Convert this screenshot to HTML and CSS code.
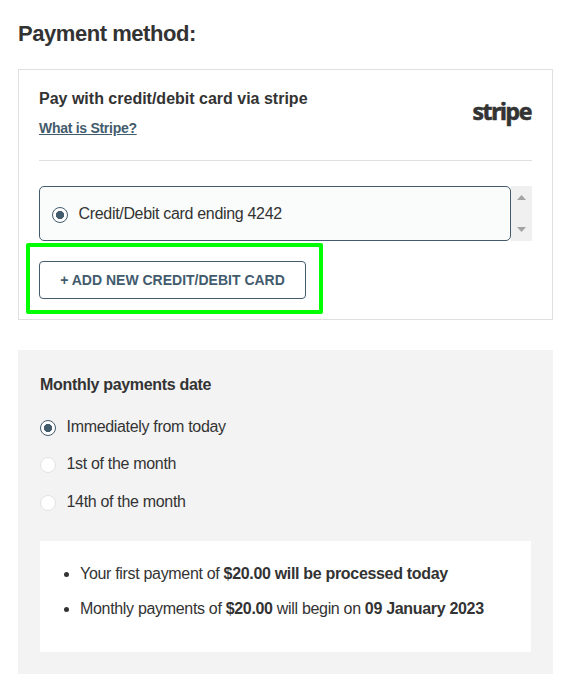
FILE: index.html
```html
<!DOCTYPE html>
<html lang="en">
<head>
    <meta charset="UTF-8">
    <meta name="viewport" content="width=device-width, initial-scale=1.0">
    <title>Payment method</title>
    <link rel="stylesheet" href="styles.css">
</head>
<body>
    <h1>Payment method:</h1>

    <div class="payment-box">
        <div class="payment-header">
            <div>
                <h2>Pay with credit/debit card via stripe</h2>
                <a class="stripe-link" href="#">What is Stripe?</a>
            </div>
            <span class="stripe-logo">stripe</span>
        </div>

        <div class="card-list">
            <label class="card-item">
                <input type="radio" name="card" checked>
                <span>Credit/Debit card ending 4242</span>
            </label>
            <div class="scroll-bar">
                <svg width="9" height="5" viewBox="0 0 9 5"><path d="M0 5L4.5 0L9 5Z"/></svg>
                <svg width="9" height="5" viewBox="0 0 9 5"><path d="M0 0L4.5 5L9 0Z"/></svg>
            </div>
        </div>

        <div class="highlight">
            <button type="button">+ ADD NEW CREDIT/DEBIT CARD</button>
        </div>
    </div>

    <div class="date-box">
        <h2>Monthly payments date</h2>
        <label class="date-item">
            <input type="radio" name="date" checked>
            <span>Immediately from today</span>
        </label>
        <label class="date-item">
            <input type="radio" name="date">
            <span>1st of the month</span>
        </label>
        <label class="date-item">
            <input type="radio" name="date">
            <span>14th of the month</span>
        </label>

        <ul class="summary">
            <li>Your first payment of <b>$20.00 will be processed today</b></li>
            <li>Monthly payments of <b>$20.00</b> will begin on <b>09 January 2023</b></li>
        </ul>
    </div>
</body>
</html>
```
FILE: styles.css
```css
* {
    box-sizing: border-box;
}

body {
    margin: 0;
    padding: 21px 28px 0 18px;
    font-family: Arial, "Liberation Sans", sans-serif;
    font-size: 16px;
    color: #333;
    background-color: #fff;
}

h1, h2 {
    margin: 0;
}

h1 {
    font-size: 22px;
    line-height: 26px;
    letter-spacing: -0.45px;
    margin-bottom: 22px;
}

h2 {
    font-size: 16px;
    line-height: 20px;
}

/* payment method */
.payment-box {
    height: 251px;
    padding: 19px 20px 0;
    border: 1px solid #e0e0e0;
}

.payment-header {
    display: flex;
    justify-content: space-between;
    height: 72px;
    border-bottom: 1px solid #e0e0e0;
}

.stripe-link {
    display: block;
    margin-top: 10px;
    font-size: 14px;
    font-weight: bold;
    line-height: 18px;
    letter-spacing: -0.28px;
    color: #425b6d;
}

.stripe-logo {
    height: 34px;
    margin-top: 5px;
    margin-right: 1px;
    font-family: "Noto Sans", sans-serif;
    font-size: 23px;
    font-weight: 700;
    line-height: 34px;
    letter-spacing: -1.4px;
    -webkit-text-stroke: 0.6px #333;
}

.card-list {
    display: flex;
    height: 55px;
    margin-top: 25px;
}

.card-item {
    display: flex;
    align-items: center;
    flex: 1;
    padding-left: 12px;
    letter-spacing: -0.32px;
    border: 1px solid #425b6d;
    border-radius: 5px;
    background-color: #fafcfb;
}

.scroll-bar {
    display: flex;
    flex-direction: column;
    justify-content: space-between;
    align-items: center;
    width: 21px;
    padding: 9px 0;
    background-color: #f0f0f0;
}

.scroll-bar path {
    fill: #a3a3a3;
}

input[type="radio"] {
    appearance: none;
    width: 16px;
    height: 16px;
    margin: 2px 10.5px 0 0;
    border: 1px solid #e3e3e3;
    border-radius: 50%;
    background-color: #fff;
}

input[type="radio"]:checked {
    border-color: #425b6d;
    background: radial-gradient(circle, #425b6d 3.8px, #fff 4.4px);
}

.highlight {
    width: 297px;
    height: 71px;
    margin: 2px 0 0 -13px;
    padding: 14px 9px;
    border: 4px solid #00ff00;
    border-radius: 2px;
}

button {
    width: 267px;
    height: 38px;
    padding: 0;
    font-family: inherit;
    font-size: 14px;
    font-weight: bold;
    color: #425b6d;
    background-color: #fff;
    border: 1px solid #425b6d;
    border-radius: 4px;
}

/* payment date */
.date-box {
    height: 324px;
    margin-top: 30px;
    padding: 25px 22px 0;
    letter-spacing: -0.32px;
    background-color: #f3f3f3;
}

.date-item {
    display: flex;
    align-items: center;
    height: 20px;
    margin-top: 17.4px;
}

h2 + .date-item {
    margin-top: 22px;
}

.summary {
    height: 111px;
    margin: 29.2px 0 0;
    padding: 23px 0 0 40px;
    background-color: #fff;
}

.summary li {
    margin-bottom: 15px;
    line-height: 20px;
}
```
